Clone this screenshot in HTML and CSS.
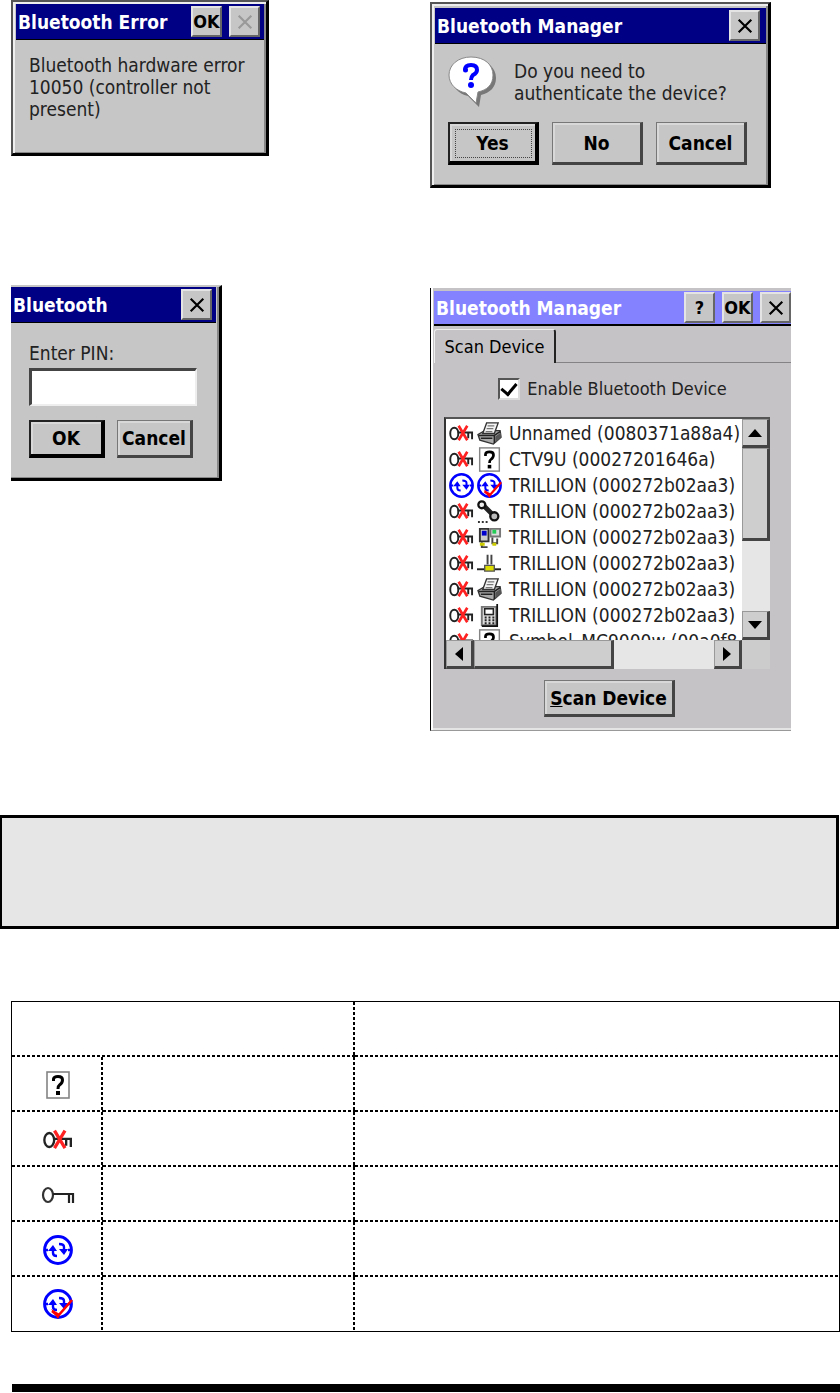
FILE: index.html
```
<!DOCTYPE html>
<html lang="en">
<head>
    <meta charset="UTF-8">
    <meta name="viewport" content="width=device-width, initial-scale=1.0">
    <title>Bluetooth Manager</title>
    <link rel="stylesheet" href="styles.css">
</head>
<body>
    <!-- Shared icons -->
    <svg class="sprite" aria-hidden="true">
        <symbol id="close" viewBox="0 0 20 20"><path d="M3 3 L17 17 M17 3 L3 17" stroke="currentColor" stroke-width="2.4" fill="none"/></symbol>
        <symbol id="key" viewBox="0 0 34 24">
            <ellipse cx="7" cy="12" rx="5" ry="7" fill="none" stroke="#333" stroke-width="2.2"/>
            <path d="M12 11 H32 V20 M28 11 V20" fill="none" stroke="#222" stroke-width="2.2"/>
        </symbol>
        <symbol id="nokey" viewBox="0 0 26 24">
            <ellipse cx="5.5" cy="12" rx="4.2" ry="6" fill="none" stroke="#222" stroke-width="2"/>
            <path d="M9 11 H24 V18 M20 12 V17" fill="none" stroke="#222" stroke-width="2"/>
            <path d="M10 4 L19 19 M19 4 L10 19" fill="none" stroke="#f22" stroke-width="2.8"/>
        </symbol>
        <symbol id="unknown" viewBox="0 0 24 28">
            <rect x="1" y="1" width="22" height="26" fill="#fff" stroke="#848484" stroke-width="1.6"/>
            <path d="M7.500 10 V8 Q8 5.500 12 5.500 Q16.500 5.500 16.500 9 Q16.500 12 13.500 14 Q12 15 12 18" fill="none" stroke="#000" stroke-width="3"/>
            <rect x="10" y="20" width="4" height="4"/>
        </symbol>
        <symbol id="active" viewBox="0 0 30 30">
            <circle cx="15" cy="15" r="13.4" fill="none" stroke="#00f" stroke-width="3"/>
            <path d="M2 15 H5 M25 15 H28 M10 13 V18 Q10 21 14 21 M16 9 Q21 9 21 12 V17" fill="none" stroke="#00f" stroke-width="2.4"/>
            <path d="M5 16 L10 10 L14 16 Z M16 14 L21 20 L25 14 Z" fill="#00f"/>
        </symbol>
        <symbol id="active-auth" viewBox="0 0 30 30">
            <use href="#active"/>
            <path d="M29 11 L15 27 L9 22" fill="none" stroke="#f00" stroke-width="2.6"/>
            <path d="M8 20 L17 25 L15 30 Z" fill="#f00"/>
        </symbol>
        <symbol id="printer" viewBox="0 0 26 26">
            <path d="M1 14 L8 10 H24 L25 17 L17 24 L3 20 Z" fill="#aaa" stroke="#333" stroke-width="1.4"/>
            <path d="M6 13 L10 2 H22 L18 13 Z" fill="#f4f4f4" stroke="#333" stroke-width="1.4"/>
            <path d="M11 5 H18 M10 8 H17 M9 11 H16" stroke="#777" stroke-width="1.2"/>
            <path d="M2 15 H18 L24 11 M18 15 V23 M4 18 H16" fill="none" stroke="#222" stroke-width="1.5"/>
            <path d="M19 16 L25 12 V17 L19 23 Z" fill="#555"/>
        </symbol>
        <symbol id="handset" viewBox="0 0 26 26">
            <path d="M5 5 L18 18" stroke="#222" stroke-width="5"/>
            <circle cx="5" cy="6" r="3.6" fill="#eee" stroke="#111" stroke-width="2.4"/>
            <circle cx="18" cy="18" r="4.2" fill="#bbb" stroke="#111" stroke-width="2.4"/>
            <path d="M1 24 H13" stroke="#333" stroke-width="2" stroke-dasharray="2 2"/>
        </symbol>
        <symbol id="computers" viewBox="0 0 26 26">
            <path d="M3 4 H12 V17 H3 Z" fill="#ccc" stroke="#333" stroke-width="2"/>
            <rect x="5" y="6" width="5" height="5" fill="#00c"/>
            <path d="M14 4 H24 V12 H14 Z" fill="#ddd" stroke="#777" stroke-width="2"/>
            <rect x="16" y="5" width="4" height="4" fill="#2c5"/>
            <path d="M5 18 V23 H11 M16 13 V19 H21 V14" fill="none" stroke="#444" stroke-width="2"/>
            <path d="M3 20 H8 M16 20 H20" stroke="#cc0" stroke-width="3"/>
        </symbol>
        <symbol id="network" viewBox="0 0 26 26">
            <path d="M0 19 H25" stroke="#222" stroke-width="2"/>
            <path d="M11 4 V14 M15 4 V14" stroke="#444" stroke-width="2"/>
            <path d="M8 15 H18 V21 H8 Z" fill="#dd0" stroke="#555" stroke-width="1.4"/>
        </symbol>
        <symbol id="phone" viewBox="0 0 26 26">
            <path d="M5 4 H20 V23 H5 Z" fill="#ddd" stroke="#777" stroke-width="2"/>
            <path d="M21 1 V24 H5" stroke="#111" stroke-width="1.8" fill="none"/>
            <rect x="8" y="6" width="9" height="6" fill="#fff" stroke="#222" stroke-width="1.6"/>
            <path d="M8 15 H18 M8 18 H18 M8 21 H18" stroke="#222" stroke-width="2" stroke-dasharray="2 2"/>
        </symbol>
        <symbol id="arrow" viewBox="0 0 16 16"><path d="M1 12 L8 4 L15 12 Z" fill="#000"/></symbol>
    </svg>

    <main class="screens">
        <section class="dialog error">
            <header class="titlebar">
                <h2>Bluetooth Error</h2>
                <button class="cap">OK</button>
                <button class="cap" aria-label="Close" disabled><svg><use href="#close"/></svg></button>
            </header>
            <p>Bluetooth hardware error<br>10050 (controller not<br>present)</p>
        </section>

        <section class="dialog confirm">
            <header class="titlebar">
                <h2>Bluetooth Manager</h2>
                <button class="cap" aria-label="Close"><svg><use href="#close"/></svg></button>
            </header>
            <div class="question">
                <svg class="bubble" viewBox="0 0 50 52">
                    <path d="M26 4 C40 4 48 12 48 22 C48 31 42 37 33 39 L31 51 L20 40 C10 38 4 30 4 22 C4 12 13 4 26 4 Z" fill="#777"/>
                    <path d="M23 1 C37 1 45 9 45 19 C45 29 39 34 30 36 L28 47 L18 37 C8 35 1 28 1 19 C1 9 10 1 23 1 Z" fill="#fff" stroke="#888"/>
                    <path d="M17 14 Q17 9 23 9 Q29 9 29 14 Q29 17 25 19 Q23 21 23 24" fill="none" stroke="#00f" stroke-width="4"/>
                    <circle cx="17.500" cy="14" r="2.500" fill="#00f"/>
                    <circle cx="23" cy="29" r="3" fill="#00f"/>
                </svg>
                <p>Do you need to<br>authenticate the device?</p>
            </div>
            <div class="actions">
                <button class="btn default focused">Yes</button>
                <button class="btn">No</button>
                <button class="btn">Cancel</button>
            </div>
        </section>

        <section class="dialog pin">
            <header class="titlebar">
                <h2>Bluetooth</h2>
                <button class="cap" aria-label="Close"><svg><use href="#close"/></svg></button>
            </header>
            <div class="pin-form">
                <label for="pin">Enter PIN:</label>
                <input type="text" id="pin">
                <div class="pin-actions">
                    <button class="btn default">OK</button>
                    <button class="btn">Cancel</button>
                </div>
            </div>
        </section>

        <section class="manager">
            <header class="titlebar">
                <h2>Bluetooth Manager</h2>
                <button class="cap" aria-label="Help">?</button>
                <button class="cap">OK</button>
                <button class="cap" aria-label="Close"><svg><use href="#close"/></svg></button>
            </header>
            <div class="tabs"><button class="tab">Scan Device</button></div>
            <div class="panel">
                <div class="enable">
                    <input type="checkbox" id="enable" checked>
                    <label for="enable">Enable Bluetooth Device</label>
                </div>
                <div class="listbox">
                    <ul class="devices">
                        <li><svg><use href="#nokey"/></svg><svg><use href="#printer"/></svg><span>Unnamed (0080371a88a4)</span></li>
                        <li><svg><use href="#nokey"/></svg><svg><use href="#unknown"/></svg><span>CTV9U (00027201646a)</span></li>
                        <li><svg><use href="#active"/></svg><svg><use href="#active-auth"/></svg><span>TRILLION (000272b02aa3)</span></li>
                        <li><svg><use href="#nokey"/></svg><svg><use href="#handset"/></svg><span>TRILLION (000272b02aa3)</span></li>
                        <li><svg><use href="#nokey"/></svg><svg><use href="#computers"/></svg><span>TRILLION (000272b02aa3)</span></li>
                        <li><svg><use href="#nokey"/></svg><svg><use href="#network"/></svg><span>TRILLION (000272b02aa3)</span></li>
                        <li><svg><use href="#nokey"/></svg><svg><use href="#printer"/></svg><span>TRILLION (000272b02aa3)</span></li>
                        <li><svg><use href="#nokey"/></svg><svg><use href="#phone"/></svg><span>TRILLION (000272b02aa3)</span></li>
                        <li><svg><use href="#nokey"/></svg><svg><use href="#unknown"/></svg><span>Symbol_MC9000w (00a0f8</span></li>
                    </ul>
                    <div class="scroll vertical">
                        <button aria-label="Scroll up"><svg><use href="#arrow"/></svg></button>
                        <div class="thumb"></div>
                        <button aria-label="Scroll down"><svg class="down"><use href="#arrow"/></svg></button>
                    </div>
                    <div class="scroll horizontal">
                        <button aria-label="Scroll left"><svg class="left"><use href="#arrow"/></svg></button>
                        <div class="thumb"></div>
                        <button aria-label="Scroll right"><svg class="right"><use href="#arrow"/></svg></button>
                    </div>
                    <div class="corner"></div>
                </div>
                <button class="btn scan"><u>S</u>can Device</button>
            </div>
        </section>
    </main>

    <aside class="note"></aside>

    <table class="legend">
        <colgroup><col class="col-icon"><col class="col-name"><col></colgroup>
        <tr><td colspan="2"></td><td></td></tr>
        <tr><td><svg><use href="#unknown"/></svg></td><td></td><td></td></tr>
        <tr><td><svg class="wide"><use href="#nokey"/></svg></td><td></td><td></td></tr>
        <tr><td><svg class="wide"><use href="#key"/></svg></td><td></td><td></td></tr>
        <tr><td><svg class="round"><use href="#active"/></svg></td><td></td><td></td></tr>
        <tr><td><svg class="round"><use href="#active-auth"/></svg></td><td></td><td></td></tr>
    </table>

    <footer class="rule"></footer>
</body>
</html>
```
FILE: styles.css
```
* {
    box-sizing: border-box;
}
body {
    margin: 0;
    background: #fff;
    color: #222;
    font-family: "DejaVu Sans Condensed", "Noto Sans", sans-serif;
    font-size: 19px;
    line-height: 22px;
}
h2, p, ul {
    margin: 0;
    padding: 0;
}
button {
    font: inherit;
    font-weight: bold;
    color: #000;
    padding: 0;
    border-radius: 0;
}
.sprite {
    position: absolute;
    width: 0;
    height: 0;
}
.screens {
    display: grid;
    grid-template-columns: 419px 1fr;
    grid-template-rows: 285px auto;
    align-items: start;
    justify-items: start;
    padding-left: 11px;
}

/* Dialogs */
.dialog {
    background: #c6c6c6;
    border: 2px solid #555;
    border-right: 3px solid #000;
    border-bottom: 3px solid #000;
    box-shadow: inset 2px 2px #eee, inset -2px -1px #888;
    padding: 2px 2px 0 3px;
}
.titlebar {
    display: flex;
    align-items: center;
    gap: 7px;
    height: 36px;
    padding: 0 4px 0 2px;
    background: #000084;
    border-bottom: 1px solid #000;
    color: #fff;
}
.titlebar h2 {
    flex: 1;
    font-size: 19px;
    white-space: nowrap;
}
.cap {
    display: flex;
    align-items: center;
    justify-content: center;
    width: 31px;
    height: 31px;
    font-size: 18px;
    background: #c6c6c6;
    border: 2px solid #e4e4e4;
    border-right-color: #666;
    border-bottom-color: #666;
}
.cap svg {
    width: 18px;
    height: 18px;
}
.cap:disabled {
    color: #999;
}
.error {
    width: 258px;
    height: 156px;
}
.error p {
    padding: 14px 13px;
    white-space: nowrap;
}
.confirm {
    width: 341px;
    height: 186px;
    margin-top: 2px;
    padding-top: 4px;
}
.confirm .titlebar {
    padding-right: 6px;
}
.question {
    display: flex;
    gap: 16px;
    padding: 12px 0 0 13px;
    white-space: nowrap;
}
.question p {
    padding-top: 4px;
}
.bubble {
    width: 50px;
    height: 52px;
}
.actions {
    display: flex;
    gap: 13px;
    padding: 14px 13px;
}
.btn {
    background: #c6c6c6;
    border: 1px solid #777;
    border-right: 3px solid #444;
    border-bottom: 3px solid #444;
    box-shadow: inset 2px 2px #d8d8d8;
}
.btn.default {
    border: 2px solid #222;
    border-right: 4px solid #000;
    border-bottom: 4px solid #000;
}
.actions .btn {
    width: 91px;
    height: 43px;
}
.focused {
    outline: 1px dotted #444;
    outline-offset: -8px;
}
.pin {
    width: 211px;
    height: 196px;
    padding: 0 3px 0 0;
    border-left: 0;
    border-top-color: #c6c6c6;
    box-shadow: inset -2px -1px #888;
}
.pin-form {
    padding: 19px 18px;
}
.pin-form label {
    display: block;
}
.pin-form input {
    display: block;
    width: 168px;
    height: 38px;
    margin: 4px 0 14px;
    font: inherit;
    background: #fff;
    border: 2px solid #eee;
    border-top: 3px solid #444;
    border-left: 3px solid #444;
}
.pin-actions {
    display: flex;
    gap: 12px;
}
.pin-actions .btn {
    width: 76px;
    height: 38px;
}

/* Manager window */
.manager {
    width: 361px;
    margin-top: 3px;
    background: #c6c3c6;
    border-left: 1px solid #000;
    border-bottom: 1px solid #999;
    box-shadow: inset 2px 0 #fff, inset 0 -2px #e4e4e4;
    padding: 3px 0 13px 3px;
}
.manager .titlebar {
    height: 35px;
    padding-right: 0;
    background: #8482ff;
    border-bottom: 2px solid #000;
}
.tabs {
    height: 37px;
    padding-top: 3px;
    border-bottom: 1px solid #848284;
}
.tab {
    width: 122px;
    height: 34px;
    font-size: 18px;
    font-weight: normal;
    background: #c6c3c6;
    border: 1px solid #eee;
    border-right: 2px solid #222;
    border-bottom: 0;
    border-radius: 3px 3px 0 0;
}
.enable {
    display: flex;
    align-items: center;
    justify-content: center;
    gap: 7px;
    padding-top: 15px;
    font-size: 18px;
}
.enable input {
    appearance: none;
    width: 22px;
    height: 22px;
    margin: 0;
    background: #fff;
    border: 2px solid #555;
    border-right-color: #ddd;
    border-bottom-color: #ddd;
}
.enable input:checked::before {
    content: "";
    display: block;
    width: 7px;
    height: 12px;
    margin: 0 auto;
    border: solid #000;
    border-width: 0 3px 3px 0;
    transform: rotate(40deg);
}
.listbox {
    display: grid;
    grid-template-columns: 1fr 28px;
    grid-template-rows: 221px 29px;
    width: 326px;
    margin: 17px 0 11px 10px;
    background: #fff;
    border-left: 2px solid #333;
    border-top: 2px solid #555;
}
.devices {
    overflow: hidden;
    list-style: none;
    padding: 1px 0 0 3px;
}
.devices li {
    display: flex;
    align-items: center;
    gap: 3px;
    height: 26px;
    white-space: nowrap;
}
.devices svg {
    flex: none;
    width: 25px;
    height: 25px;
}
.devices span {
    padding-left: 4px;
}
.scroll {
    display: flex;
    background: #e6e6e6;
}
.scroll.vertical {
    flex-direction: column;
}
.scroll button, .thumb {
    flex: none;
    background: #cecece;
    border: 1px solid #999;
    border-right: 3px solid #444;
    border-bottom: 3px solid #444;
}
.scroll button {
    display: flex;
    align-items: center;
    justify-content: center;
    width: 28px;
    height: 29px;
}
.scroll button:last-child {
    margin-top: auto;
}
.horizontal button:last-child {
    margin-left: auto;
}
.scroll svg {
    width: 16px;
    height: 16px;
}
.vertical .thumb {
    height: 93px;
}
.horizontal .thumb {
    width: 140px;
}
.down {
    transform: rotate(180deg);
}
.left {
    transform: rotate(-90deg);
}
.right {
    transform: rotate(90deg);
}
.corner {
    background: #ccc;
}
.scan {
    display: block;
    width: 131px;
    height: 37px;
    margin-left: 110px;
}

/* Note box */
.note {
    height: 114px;
    margin: 84px 1px 72px 0;
    background: #e6e6e6;
    border: 3px solid #000;
    border-left-width: 2px;
}

/* Icon legend */
.legend {
    width: calc(100% - 11px);
    margin-left: 11px;
    table-layout: fixed;
    border-collapse: separate;
    border-spacing: 0;
    border: 1px solid #000;
}
.col-icon {
    width: 91px;
}
.col-name {
    width: 252px;
}
.legend td {
    height: 55px;
    padding: 0;
    background:
        repeating-linear-gradient(90deg, #000 0 3px, #fff 3px 5px) left bottom / 100% 2px no-repeat,
        repeating-linear-gradient(#000 0 3px, #fff 3px 5px) right top / 2px 100% no-repeat;
}
.legend td:last-child {
    background: repeating-linear-gradient(90deg, #000 0 3px, #fff 3px 5px) left bottom / 100% 2px no-repeat;
}
.legend tr:last-child td {
    height: 54px;
    background: repeating-linear-gradient(#000 0 3px, #fff 3px 5px) right top / 2px 100% no-repeat;
}
.legend tr:last-child td:last-child {
    background: none;
}
.legend svg {
    display: block;
    width: 24px;
    height: 28px;
    margin: 0 auto;
}
.legend .wide {
    width: 34px;
}
.legend .round {
    width: 30px;
    height: 30px;
}
.rule {
    height: 8px;
    margin: 52px 0 0 12px;
    background: #000;
}
```
